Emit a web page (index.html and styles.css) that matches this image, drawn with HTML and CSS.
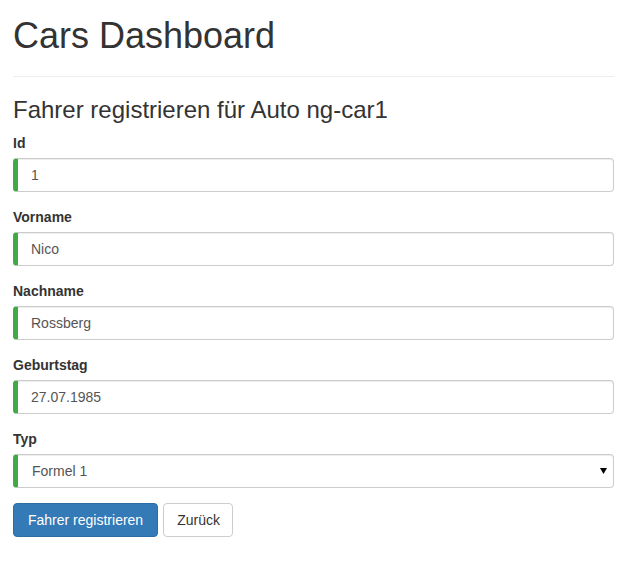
FILE: index.html
```html
<!DOCTYPE html>
<html lang="de">
<head>
<meta charset="utf-8">
<title>Cars Dashboard</title>
<link rel="stylesheet" href="styles.css">
</head>
<body>
<div class="container">
  <div class="page-header">
    <h1>Cars Dashboard</h1>
  </div>
  <h3>Fahrer registrieren für Auto ng-car1</h3>
  <form class="form">
    <div class="form-group">
      <label for="id">Id</label>
      <input id="id" class="form-control" type="text" value="1">
    </div>
    <div class="form-group">
      <label for="vorname">Vorname</label>
      <input id="vorname" class="form-control" type="text" value="Nico">
    </div>
    <div class="form-group">
      <label for="nachname">Nachname</label>
      <input id="nachname" class="form-control" type="text" value="Rossberg">
    </div>
    <div class="form-group">
      <label for="geburtstag">Geburtstag</label>
      <input id="geburtstag" class="form-control" type="text" value="27.07.1985">
    </div>
    <div class="form-group">
      <label for="typ">Typ</label>
      <select id="typ" class="form-control select">
        <option>Formel 1</option>
      </select>
    </div>
    <div class="actions">
      <button type="button" class="btn btn-primary">Fahrer registrieren</button>
      <button type="button" class="btn btn-default">Zurück</button>
    </div>
  </form>
</div>
</body>
</html>
```

FILE: styles.css
```css
* { box-sizing: border-box; }
html, body { margin: 0; padding: 0; background: #fff; }
body {
  font-family: "Liberation Sans", Arial, sans-serif;
  font-size: 14px;
  line-height: 1.42857143;
  color: #333;
}
.container { padding: 0 13px; }
.page-header {
  padding-bottom: 20px;
  border-bottom: 1px solid #eee;
}
h1 {
  margin: 16px 0 0;
  font-size: 36px;
  font-weight: 500;
  line-height: 39.6px;
  color: #333;
}
h3 {
  margin: 20px 0 10px;
  font-size: 24px;
  font-weight: 500;
  line-height: 26.4px;
  color: #333;
}
.form-group { margin-bottom: 15px; }
label {
  display: block;
  margin-bottom: 5px;
  font-weight: 700;
  font-size: 14px;
  line-height: 20px;
}
.form-control {
  display: block;
  width: 100%;
  height: 34px;
  padding: 6px 12px 6px 13px;
  font-family: inherit;
  font-size: 14px;
  line-height: 1.42857143;
  color: #555;
  background: #fff;
  border: 1px solid #ccc;
  border-left: 5px solid #42a948;
  border-radius: 4px;
  box-shadow: inset 0 1px 1px rgba(0,0,0,.075);
  outline: none;
}
.select {
  -webkit-appearance: none;
  appearance: none;
  padding-left: 14px;
  background-image: url("data:image/svg+xml,%3Csvg xmlns='http://www.w3.org/2000/svg' width='7' height='6'%3E%3Cpath d='M0 0h7L3.5 6z' fill='%23000'/%3E%3C/svg%3E");
  background-repeat: no-repeat;
  background-position: right 6px center;
  background-size: 7px 6px;
}
.actions { display: flex; gap: 5px; }
.btn {
  display: inline-block;
  height: 34px;
  padding: 6px 12px;
  font-family: inherit;
  font-size: 14px;
  line-height: 1.42857143;
  border: 1px solid transparent;
  border-radius: 4px;
  cursor: pointer;
}
.btn-primary {
  padding: 6px 14px;
  color: #fff;
  background: #337ab7;
  border-color: #2e6da4;
}
.btn-default {
  padding: 6px 12px 6px 13px;
  color: #333;
  background: #fff;
  border-color: #ccc;
}
```
